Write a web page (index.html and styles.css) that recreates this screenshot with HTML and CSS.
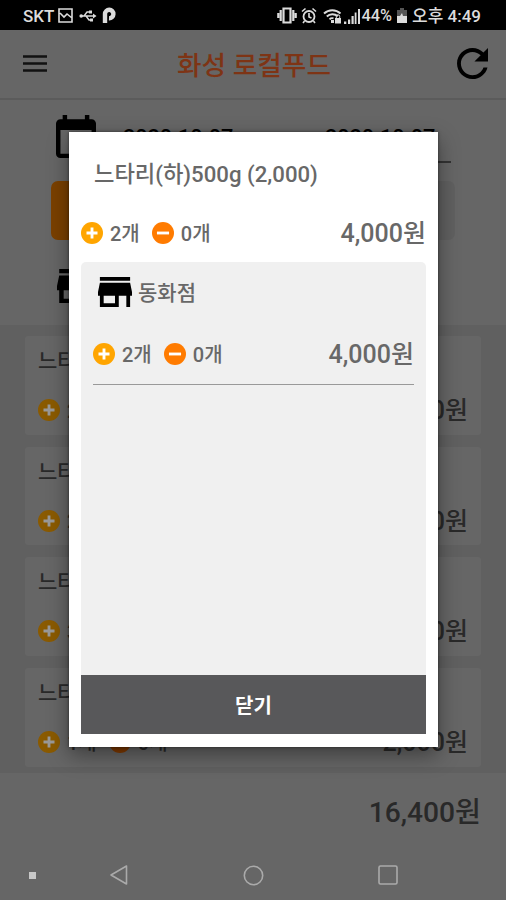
FILE: index.html
```html
<!DOCTYPE html>
<html lang="ko">
<head>
<meta charset="utf-8">
<title>화성 로컬푸드</title>
<link rel="stylesheet" href="styles.css">
</head>
<body>
<svg class="defs" aria-hidden="true">
  <symbol id="plus" viewBox="2 2 20 20"><circle cx="12" cy="12" r="10" fill="currentColor"/><path d="M7 12h10M12 7v10" class="sign"/></symbol>
  <symbol id="minus" viewBox="2 2 20 20"><circle cx="12" cy="12" r="10" fill="currentColor"/><path d="M6.5 12h11" class="sign"/></symbol>
</svg>
<div class="phone">
  <div class="status">
    <span class="carrier">SKT</span>
    <svg class="s-pic" width="15" height="15" viewBox="0 0 15 15"><path d="M1 1h13v13H1zM2 5l4 4 3-3 5 4" fill="none" stroke="currentColor" stroke-width="1.6"/></svg>
    <svg class="s-usb" width="18" height="14" viewBox="0 0 18 14"><path d="M2 7h13M5 7l3-4h3M7 7l3 4h2" fill="none" stroke="currentColor" stroke-width="1.4"/><circle cx="2.2" cy="7" r="1.8" fill="currentColor"/><path d="M14 4.5 17.5 7 14 9.500zM10 1.500h3v3h-3zM11 9.500h3v3h-3z" fill="currentColor"/></svg>
    <svg class="s-p" width="14" height="17" viewBox="0 0 14 17"><path d="M3 16V7a4.200 4.200 0 1 1 4 4.200" fill="none" stroke="currentColor" stroke-width="4.400"/></svg>
    <span class="grow"></span>
    <svg class="s-vib" width="20" height="17" viewBox="0 0 20 17"><path d="M6.500 1.500h7v14h-7z" fill="none" stroke="currentColor" stroke-width="2.200"/><path d="M3.700 3v11M16.300 3v11M1.300 6v5M18.700 6v5" stroke="currentColor" stroke-width="2.200"/></svg>
    <svg class="s-alarm" width="16" height="17" viewBox="0 0 16 17"><circle cx="8" cy="9.500" r="5.500" fill="none" stroke="currentColor" stroke-width="1.800"/><path d="M1 4.500 4.500 1.500M15 4.500 11.500 1.500M8 6v4l2.500 1M3.500 14 2 16M12.500 14l1.500 2" fill="none" stroke="currentColor" stroke-width="1.600"/></svg>
    <svg class="s-wifi" width="19" height="16" viewBox="0 0 19 16"><path d="M1 5.500a12 12 0 0 1 16.500 0M3.800 8.500a8 8 0 0 1 11-.2M6.500 11.300a4 4 0 0 1 4-1" fill="none" stroke="currentColor" stroke-width="1.900"/><path d="M8 12h3v3H8zM12 10h6v5.500h-6z" fill="currentColor"/><path d="M13.300 10V8.500a1.700 1.700 0 0 1 3.400 0V10" fill="none" stroke="currentColor"/></svg>
    <svg class="s-sig" width="17" height="16" viewBox="0 0 17 16"><path d="M1 13.500h2.300V16H1zM5 11.500h2.200V16H5zM8.500 8h2.200v8H8.500zM11.700 4.500h1.800V16h-1.800zM15 1h2v15h-2z" fill="currentColor"/></svg>
    <span class="pct">44%</span>
    <svg class="s-bat" width="10" height="15" viewBox="0 0 10 15"><path d="M3 0h4v2h3v13H0V2h3z" fill="#555"/><path d="M0 8h3l2-3 1 3h4v7H0z" fill="currentColor"/></svg>
    <span class="clock">오후 4:49</span>
  </div>
  <header class="bar">
    <svg width="24" height="17" viewBox="0 0 24 17"><path d="M0 1.500h24M0 8.500h24M0 15.500h24" stroke="currentColor" stroke-width="2.600"/></svg>
    <h1>화성 로컬푸드</h1>
    <svg width="31" height="31" viewBox="4 4 16 16"><path fill="currentColor" d="M17.650 6.350C16.200 4.900 14.210 4 12 4c-4.420 0-7.990 3.580-7.990 8s3.570 8 7.990 8c3.730 0 6.840-2.550 7.730-6h-2.080c-.82 2.330-3.040 4-5.650 4-3.310 0-6-2.690-6-6s2.690-6 6-6c1.660 0 3.140.69 4.220 1.780L13 11h7V4l-2.350 2.350z"/></svg>
  </header>
  <section class="filter">
    <div class="dates">
      <svg width="40" height="43" viewBox="3 1 18 20" preserveAspectRatio="none"><path fill="currentColor" d="M17 12h-5v5h5v-5zM16 1v2H8V1H6v2H5c-1.110 0-1.990.9-1.990 2L3 19c0 1.100.89 2 2 2h14c1.100 0 2-.9 2-2V5c0-1.100-.9-2-2-2h-1V1h-2zm3 18H5V8h14v11z"/></svg>
      <span class="date">2020.10.07</span><span class="date">2020.10.07</span>
    </div>
    <div class="tabs"><span class="tab on"></span><span class="tab"></span></div>
    <svg class="shop" width="40" height="34" viewBox="3 4 18 16" preserveAspectRatio="none"><path fill="currentColor" d="M20 4H4v2h16V4zm1 10v-2l-1-5H4l-1 5v2h1v6h10v-6h4v6h2v-6h1zm-9 4H6v-4h6v4z"/></svg>
  </section>
  <main class="list">
    <article class="card"><h2>느타리</h2><div class="row"><svg class="ico add"><use href="#plus"/></svg><span class="n">2개</span><svg class="ico sub"><use href="#minus"/></svg><span class="n">0개</span><b>4,000원</b></div></article>
    <article class="card"><h2>느타리</h2><div class="row"><svg class="ico add"><use href="#plus"/></svg><span class="n">2개</span><svg class="ico sub"><use href="#minus"/></svg><span class="n">0개</span><b>4,400원</b></div></article>
    <article class="card"><h2>느타리</h2><div class="row"><svg class="ico add"><use href="#plus"/></svg><span class="n">3개</span><svg class="ico sub"><use href="#minus"/></svg><span class="n">0개</span><b>6,000원</b></div></article>
    <article class="card"><h2>느타리</h2><div class="row"><svg class="ico add"><use href="#plus"/></svg><span class="n">1개</span><svg class="ico sub"><use href="#minus"/></svg><span class="n">0개</span><b>2,000원</b></div></article>
  </main>
  <footer class="total">16,400원</footer>
  <nav class="nav">
    <i class="dot"></i>
    <svg width="20" height="22" viewBox="0 0 20 22"><path d="M17.500 2v18L2 11z" class="key"/></svg>
    <svg width="21" height="21" viewBox="0 0 21 21"><circle cx="10.500" cy="10.500" r="9.200" class="key"/></svg>
    <svg width="20" height="20" viewBox="0 0 20 20"><rect x="1" y="1" width="18" height="18" rx="1.500" class="key"/></svg>
  </nav>
  <div class="dialog" role="dialog">
    <h3>느타리(하)500g (2,000)</h3>
    <div class="row"><svg class="ico add"><use href="#plus"/></svg><span class="n">2개</span><svg class="ico sub"><use href="#minus"/></svg><span class="n">0개</span><b>4,000원</b></div>
    <div class="panel">
      <div class="branch"><svg width="34" height="30" viewBox="3 4 18 16" preserveAspectRatio="none"><path fill="currentColor" d="M20 4H4v2h16V4zm1 10v-2l-1-5H4l-1 5v2h1v6h10v-6h4v6h2v-6h1zm-9 4H6v-4h6v4z"/></svg><span>동화점</span></div>
      <div class="row"><svg class="ico add"><use href="#plus"/></svg><span class="n">2개</span><svg class="ico sub"><use href="#minus"/></svg><span class="n">0개</span><b>4,000원</b></div>
    </div>
    <button class="close">닫기</button>
  </div>
</div>
</body>
</html>
```
FILE: styles.css
```css
* { box-sizing: border-box; margin: 0; }
body { width: 506px; height: 900px; overflow: hidden; font-family: Roboto, "Noto Sans CJK KR", sans-serif; font-weight: 500; }
svg { display: block; flex: none; }
.defs { display: none; }
.sign { stroke: var(--sign, #fff); stroke-width: 2.6; fill: none; }
.phone { position: relative; height: 900px; background: #666; display: flex; flex-direction: column; }

.status { height: 30px; flex: none; background: #000; color: #dcdcdc; display: flex; align-items: center; padding: 1px 25px 0 23px; font-size: 17px; line-height: 28px; white-space: nowrap; }
.grow { flex: 1; }
.s-pic { margin-left: 4px; }
.s-usb { margin-left: 6px; }
.s-p { margin-left: 5px; }
.s-alarm { margin-left: 4px; }
.s-wifi { margin-left: 6px; }
.s-sig { margin-left: 1px; }
.pct { margin-left: 2px; font-size: 16.300px; }
.s-bat { margin: 0 5px; }

.bar { height: 70px; flex: none; display: flex; align-items: center; justify-content: space-between; padding: 0 18px 2px 23px; color: #111; border-bottom: 2px solid #5b5b5b; }
.bar svg:last-child { color: #000; }
.bar h1 { position: relative; top: 3px; margin-left: 4px; font-size: 26.700px; line-height: 36px; font-weight: 500; color: #7e3415; }

.filter { height: 225px; flex: none; padding: 15px 51px 0; color: #000; }
.dates { display: flex; height: 48px; padding: 0 4px 0 5px; }
.date { width: 152px; margin-right: 50px; padding: 11px 0 0 27px; font-size: 21.600px; line-height: 24px; border-bottom: 2px solid #333; }
.date + .date { margin-right: 0; flex: 1; }
.tabs { display: flex; margin: 18px 0 0; height: 59px; }
.tab { flex: 1; background: #606060; border-radius: 0 7px 7px 0; }
.tab.on { background: #7a4000; border-radius: 7px 0 0 7px; }
.shop { margin: 29px 0 0 6px; }

.list { height: 448px; flex: none; background: #606060; padding: 11px 25px 0; display: flex; flex-direction: column; gap: 12px; }
.card { height: 98.700px; flex: none; background: #666; border-radius: 3px; padding: 8px 13px 0; color: #292929; --sign: #999; }
.card h2 { font-size: 21px; line-height: 34px; font-weight: 500; }
.row { display: flex; align-items: center; height: 34px; }
.ico { width: 22px; height: 22px; }
.n { font-size: 20px; margin: -2px 12px 0 7px; }
.row b { margin: -4px 0 0 auto; font-size: 25px; font-weight: 500; }
.card .row { margin-top: 15px; }
.card .add { color: #8a5a00; }
.card .sub { color: #833b00; }

.total { height: 77px; flex: none; padding-right: 25px; text-align: right; font-size: 28.200px; line-height: 79px; color: #292929; }
.nav { flex: 1; display: grid; grid-template-columns: 64px 109px 160px 109px; align-items: center; justify-items: center; }
.dot { width: 7px; height: 7px; background: #c8c8c8; }
.key { fill: none; stroke: #aaa; stroke-width: 1.600; stroke-linejoin: round; }

.dialog { position: absolute; left: 69px; top: 132px; width: 369px; height: 615px; padding: 25px 12px 13px; background: #fff; color: #686868; display: flex; flex-direction: column; box-shadow: 0 8px 20px rgba(0,0,0,.4), 0 0 3px rgba(0,0,0,.5); }
.dialog h3 { font-size: 22.200px; line-height: 34px; font-weight: 500; padding-left: 13px; }
.dialog > .row { margin-top: 25px; }
.dialog .add { color: #ffa500; }
.dialog .sub { color: #ff7b00; }
.panel { margin-top: 12px; flex: 1; background: #f0f0f0; border-radius: 5px 5px 0 0; padding: 14px 12px; }
.panel .row { height: 61px; margin-top: 16px; border-bottom: 1px solid #999; }
.branch { display: flex; align-items: center; gap: 6px; height: 32px; padding-left: 5px; font-size: 21px; }
.branch svg { color: #000; }
.branch span { margin-top: -2px; }
.close { height: 59px; border: 0; background: #58585a; color: #fff; font: 700 20px Roboto, "Noto Sans CJK KR", sans-serif; }
```
